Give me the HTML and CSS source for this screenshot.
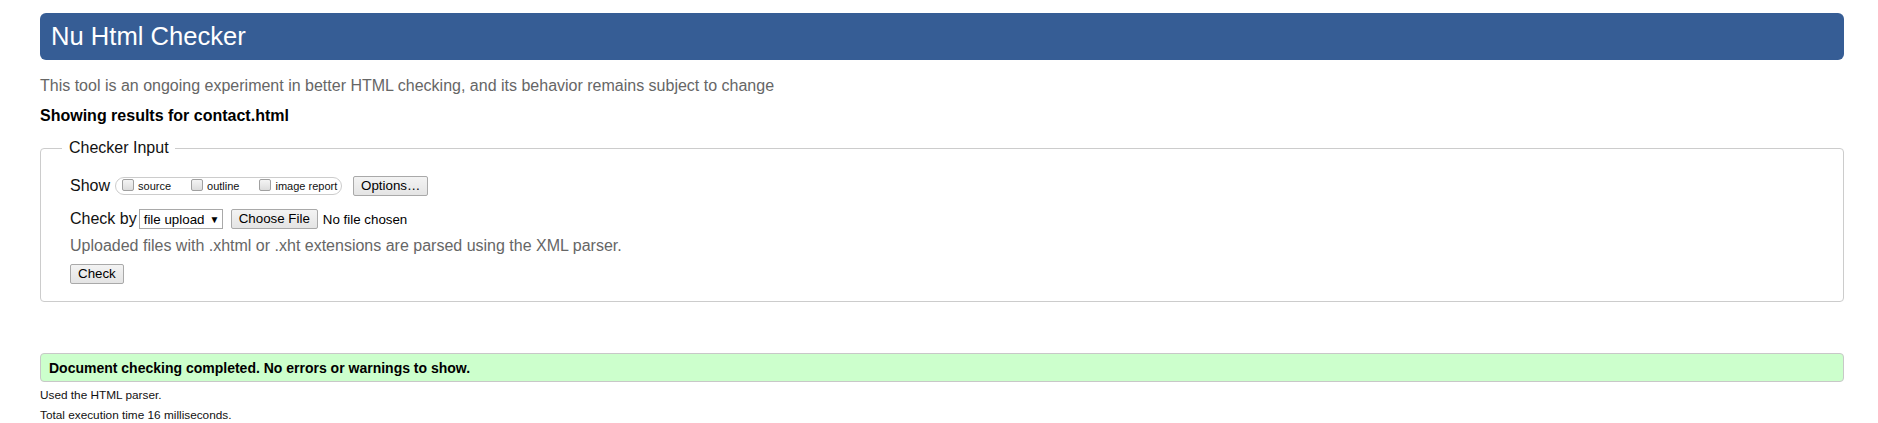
FILE: index.html
```html
<!DOCTYPE html>
<html lang="en">
<head>
<meta charset="utf-8">
<title>Nu Html Checker</title>
<link rel="stylesheet" href="styles.css">
</head>
<body>
<div class="page">
  <h1 class="title">Nu Html Checker</h1>
  <p class="intro">This tool is an ongoing experiment in better HTML checking, and its behavior remains subject to change</p>
  <p class="showing">Showing results for contact.html</p>
  <form class="checker-form" onsubmit="return false">
    <fieldset class="input-box">
      <legend class="legend">Checker Input</legend>
      <div class="rows">
        <div class="row row-show">
          <span class="lbl">Show</span>
          <span class="group">
            <label class="opt"><input type="checkbox" class="cb"><span class="opt-text">source</span></label>
            <label class="opt"><input type="checkbox" class="cb"><span class="opt-text">outline</span></label>
            <label class="opt"><input type="checkbox" class="cb"><span class="opt-text">image report</span></label>
          </span>
          <button type="button" class="btn btn-options">Options…</button>
        </div>
        <div class="row row-checkby">
          <span class="lbl lbl-checkby">Check by</span>
          <span class="select">file upload<span class="arrow">▼</span></span>
          <button type="button" class="btn btn-file">Choose File</button>
          <span class="nofile">No file chosen</span>
        </div>
        <p class="hint">Uploaded files with .xhtml or .xht extensions are parsed using the XML parser.</p>
        <div class="row row-submit">
          <button type="button" class="btn btn-check">Check</button>
        </div>
      </div>
    </fieldset>
  </form>
  <div class="success">Document checking completed. No errors or warnings to show.</div>
  <p class="small">Used the HTML parser.</p>
  <p class="small">Total execution time 16 milliseconds.</p>
</div>
</body>
</html>
```
FILE: styles.css
```css
html, body {
  margin: 0;
  background: #ffffff;
}
body {
  font-family: "Liberation Sans", Arial, sans-serif;
  color: #111;
  padding: 13px 34px 0 40px;
}
.page {
  display: block;
}
.title {
  margin: 0;
  height: 47px;
  line-height: 47px;
  font-size: 25.6px;
  font-weight: normal;
  color: #ffffff;
  background: #365d95;
  border-radius: 6px;
  padding: 0 11px;
}
.intro {
  margin: 17px 0 0;
  font-size: 16px;
  line-height: 18px;
  color: #666666;
}
.showing {
  margin: 12px 0 0;
  font-size: 16px;
  line-height: 18px;
  font-weight: bold;
  color: #000;
}
.checker-form {
  margin: 0;
}
.input-box {
  margin: 14px 0 0;
  border: 1px solid #cccccc;
  border-radius: 4px;
  padding: 19px 20px 17px 21px;
  min-width: 0;
}
.legend {
  padding: 0 6px 0 7px;
  font-size: 16px;
  line-height: 18px;
  color: #111;
}
.rows {
  padding-left: 8px;
}
.row {
  display: flex;
  align-items: center;
  height: 20px;
}
.lbl {
  font-size: 16px;
  line-height: 18px;
  color: #111;
  margin-right: 5px;
  white-space: nowrap;
}
.lbl-checkby {
  margin-right: 2px;
}
.group {
  display: inline-flex;
  align-items: flex-start;
  flex-shrink: 0;
  box-sizing: border-box;
  height: 18px;
  width: 227px;
  border: 1px solid #cccccc;
  border-radius: 9px;
  padding-left: 6px;
  padding-top: 1px;
  white-space: nowrap;
}
.opt {
  display: inline-flex;
  align-items: flex-start;
  flex-shrink: 0;
  font-size: 11px;
  color: #111;
  white-space: nowrap;
}
.opt + .opt {
  margin-left: 20px;
}
.cb {
  -webkit-appearance: none;
  appearance: none;
  flex-shrink: 0;
  margin: 0;
  width: 12px;
  height: 12px;
  box-sizing: border-box;
  border: 1px solid #a0a0a0;
  border-radius: 2px;
  background: linear-gradient(#f4f4f4, #dcdcdc);
}
.opt-text {
  line-height: 15px;
  margin-left: 4px;
}
.btn {
  font-family: "Liberation Sans", Arial, sans-serif;
  font-size: 13.333px;
  color: #000;
  height: 20px;
  flex-shrink: 0;
  box-sizing: border-box;
  margin: 0;
  padding: 0 7px;
  border: 1px solid #a9a9a9;
  border-radius: 2px;
  background: linear-gradient(#f3f3f3, #e4e4e4);
  line-height: 18px;
  white-space: nowrap;
}
.btn-options {
  margin-left: 11px;
}
.select {
  display: inline-flex;
  align-items: center;
  flex-shrink: 0;
  box-sizing: border-box;
  height: 20px;
  width: 84px;
  border: 1px solid #a9a9a9;
  background: #fff;
  padding-left: 4px;
  font-size: 13.333px;
  color: #000;
  white-space: nowrap;
}
.arrow {
  font-size: 10px;
  margin-left: 5px;
}
.btn-file {
  margin-left: 8px;
}
.nofile {
  margin-left: 5px;
  font-size: 13.333px;
  color: #000;
  white-space: nowrap;
}
.row-checkby {
  margin-top: 13px;
}
.hint {
  margin: 8px 0 0;
  font-size: 16px;
  line-height: 18px;
  color: #666666;
}
.row-submit {
  margin-top: 9px;
}
.success {
  margin-top: 51px;
  box-sizing: border-box;
  height: 29px;
  border: 1px solid #c8c8c8;
  border-radius: 4px;
  background: #ccffcc;
  padding: 1px 8px 0;
  line-height: 26px;
  font-size: 14px;
  font-weight: bold;
  color: #000;
}
.small {
  margin: 6px 0 0;
  font-size: 11.8px;
  line-height: 14px;
  color: #111;
}
```
